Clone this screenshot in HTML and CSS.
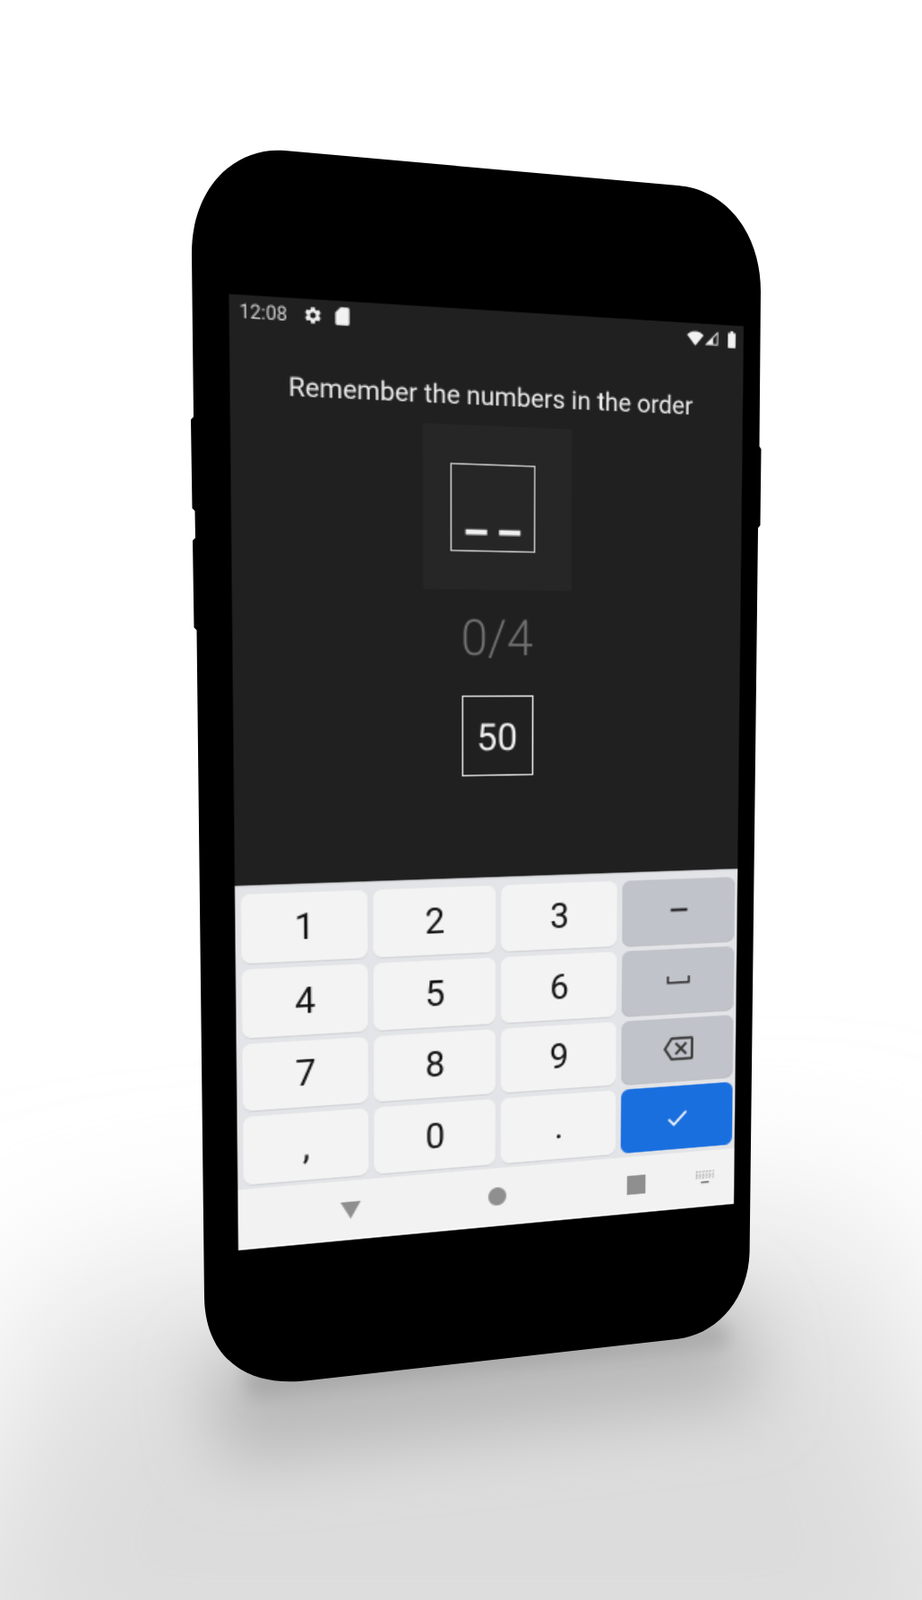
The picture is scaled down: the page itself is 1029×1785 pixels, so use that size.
FILE: index.html
```html
<!DOCTYPE html>
<html lang="en">
<head>
<meta charset="utf-8">
<title>Remember the numbers</title>
<link rel="stylesheet" href="styles.css">
</head>
<body>
<div class="stage">
  <svg class="scene" viewBox="0 0 1029 1785" width="1029" height="1785" aria-hidden="true">
    <defs>
      <filter id="soft" x="-50%" y="-50%" width="200%" height="200%"><feGaussianBlur stdDeviation="100"/></filter>
      <filter id="mid" x="-50%" y="-50%" width="200%" height="200%"><feGaussianBlur stdDeviation="38"/></filter>
      <filter id="tight" x="-50%" y="-50%" width="200%" height="200%"><feGaussianBlur stdDeviation="10"/></filter>
    </defs>
    <polygon class="floor-far" points="60,1440 960,1360 1200,1950 -160,1950"/>
    <polygon class="floor-mid" points="230,1520 820,1450 850,1560 250,1630"/>
    <polygon class="floor-near" points="270,1530 810,1478 810,1500 280,1560"/>
    <path class="body" d="M214 285 C213 210 262 163 318 168 L757 207 C812 212 849 262 849 325 L847.500 498 L849.500 501 L848.500 586 L846 589 L836.600 1397 C835 1450 800 1489 755 1494 L345 1540 C272 1549 229 1512 228 1447 L219.500 703 L216.500 700 L215 603 L218 600 L217.500 570 L214.500 567 L213 468 L216 465 Z"/>
  </svg>

  <div class="screen">
    <div class="status">
      <span class="clock">12:08</span>
      <svg class="ic gear" viewBox="0 0 24 24"><path d="M19.14 12.94c.04-.3.06-.61.06-.94 0-.32-.02-.64-.07-.94l2.03-1.58c.18-.14.23-.41.12-.61l-1.92-3.32c-.12-.22-.37-.29-.59-.22l-2.39.96c-.5-.38-1.03-.7-1.62-.94l-.36-2.54c-.04-.24-.24-.41-.48-.41h-3.84c-.24 0-.43.17-.47.41l-.36 2.54c-.59.24-1.13.57-1.62.94l-2.39-.96c-.22-.08-.47 0-.59.22L2.74 8.87c-.12.21-.08.47.12.61l2.03 1.58c-.05.3-.09.63-.09.94s.02.64.07.94l-2.03 1.58c-.18.14-.23.41-.12.61l1.92 3.32c.12.22.37.29.59.22l2.39-.96c.5.38 1.03.7 1.62.94l.36 2.54c.05.24.24.41.48.41h3.84c.24 0 .44-.17.47-.41l.36-2.54c.59-.24 1.13-.56 1.62-.94l2.39.96c.22.08.47 0 .59-.22l1.92-3.32c.12-.22.07-.47-.12-.61l-2.01-1.58zM12 15.6c-1.98 0-3.6-1.62-3.6-3.6s1.62-3.6 3.6-3.6 3.6 1.62 3.6 3.6-1.62 3.6-3.6 3.6z"/></svg>
      <svg class="ic sd" viewBox="0 0 24 24"><path d="M18 2h-8L4.02 8 4 20c0 1.1.9 2 2 2h12c1.1 0 2-.9 2-2V4c0-1.1-.9-2-2-2z"/></svg>
      <span class="spacer"></span>
      <svg class="ic wifi" viewBox="0 0 24 24"><path d="M12 21.5L.5 7.5C3.5 4.8 7.5 3 12 3s8.500 1.800 11.500 4.500z"/></svg>
      <svg class="ic signal" viewBox="0 0 24 24"><path class="dim" d="M22 22H2L22 2z"/><path d="M14 22H2L14 10z"/></svg>
      <svg class="ic battery" viewBox="0 0 24 24"><path d="M16 4h-2V2h-4v2H8c-.6 0-1 .4-1 1v16c0 .6.4 1 1 1h8c.6 0 1-.4 1-1V5c0-.6-.4-1-1-1z"/></svg>
    </div>
    <main class="game">
      <h1 class="title">Remember the numbers in the order</h1>
      <div class="panel">
        <div class="cell"><span class="blanks">_ _</span></div>
      </div>
      <div class="progress">0/4</div>
      <div class="answer">50</div>
    </main>
    <section class="keyboard">
      <div class="key">1</div>
      <div class="key">2</div>
      <div class="key">3</div>
      <div class="key fn dash">–</div>
      <div class="key">4</div>
      <div class="key">5</div>
      <div class="key">6</div>
      <div class="key fn">
        <svg class="space" viewBox="0 0 18 6"><path d="M1 0v4.800h16V0"/></svg>
      </div>
      <div class="key">7</div>
      <div class="key">8</div>
      <div class="key">9</div>
      <div class="key fn">
        <svg class="backspace" viewBox="0 0 24 24"><path d="M22 3H7c-.69 0-1.230.35-1.590.88L0 12l5.410 8.110c.36.53.9.89 1.590.89h15c1.100 0 2-.9 2-2V5c0-1.100-.9-2-2-2zm0 16H7.070L2.400 12l4.660-7H22v14zm-11.590-2L14 13.410 17.590 17 19 15.590 15.410 12 19 8.410 17.590 7 14 10.590 10.410 7 9 8.410 12.590 12 9 15.590z"/></svg>
      </div>
      <div class="key">,</div>
      <div class="key">0</div>
      <div class="key">.</div>
      <div class="key enter">
        <svg class="check" viewBox="0 0 24 24"><path d="M9 16.170L4.830 12l-1.420 1.410L9 19 21 7l-1.410-1.410z"/></svg>
      </div>
    </section>
    <nav class="navbar">
      <span class="nav-slot"><svg class="nav-tri" viewBox="0 0 14 12"><path d="M0 0h14L7 12z"/></svg></span>
      <span class="nav-slot"><span class="nav-dot"></span></span>
      <span class="nav-slot"><span class="nav-square"></span></span>
      <svg class="nav-kb" viewBox="0 0 20 14"><path d="M1 1h18M1 5h18" stroke-dasharray="2 1.300"/><path d="M1 3h18M1 7h18" stroke-dasharray="1 2.300"/><path class="nav-kb-bar" d="M6 11h8"/></svg>
    </nav>
  </div>
</div>
</body>
</html>
```

FILE: styles.css
```css
html, body {
  margin: 0;
  padding: 0;
  background: #fff;
}

.stage {
  position: relative;
  width: 1029px;
  height: 1785px;
  overflow: hidden;
  background: #fff;
  font-family: Roboto, "Liberation Sans", sans-serif;
}

.scene {
  position: absolute;
  left: 0;
  top: 0;
  display: block;
}

.floor-far { fill: #dcdcdc; filter: url(#soft); }
.floor-mid { fill: #b8b8b8; filter: url(#mid); }
.floor-near { fill: #a8a8a8; filter: url(#tight); }
.body { fill: #000; }

/* The phone screen is a flat 360x640 layout, projected on the tilted device */
.screen {
  position: absolute;
  left: 0;
  top: 0;
  width: 360px;
  height: 640px;
  display: flex;
  flex-direction: column;
  background: #202020;
  transform-origin: 0 0;
  transform: matrix3d(1.80806, 0.19308, 0, 0.00025569,
                      0.033327, 1.75592, 0, 0.00006361,
                      0, 0, 1, 0,
                      255.5, 328, 0, 1);
  filter: blur(0.35px);
}

.status {
  display: flex;
  align-items: center;
  height: 20px;
  padding: 0 2px 0 6.500px;
  color: #ddd;
  fill: #f2f2f2;
  flex: none;
}

.clock { font-size: 12.500px; width: 41px; color: #d2d2d2; }
.ic { display: block; flex: none; }
.gear { width: 13px; height: 13px; margin-right: 6px; }
.sd { width: 14px; height: 14px; }
.spacer { flex: 1; }
.wifi { width: 13px; height: 13px; margin-right: 1px; }
.signal { width: 10px; height: 10px; margin-right: 3px; }
.signal .dim { fill: none; stroke: #f2f2f2; stroke-width: 2; }
.battery { width: 14px; height: 14px; }

.game {
  flex: 1;
  min-height: 0;
  display: flex;
  flex-direction: column;
  align-items: center;
}

.title {
  margin: 26.500px 0 0;
  font-size: 17.800px;
  line-height: 22px;
  font-weight: 400;
  color: #eeeeee;
}

.panel {
  margin-top: 9.500px;
  width: 105px;
  height: 112px;
  display: flex;
  align-items: center;
  justify-content: center;
  background: #262626;
  flex: none;
}

.cell {
  box-sizing: border-box;
  width: 60px;
  height: 60px;
  margin-right: 6px;
  border: 1.200px solid #c8c8c8;
  display: flex;
  align-items: flex-end;
  justify-content: center;
  overflow: hidden;
}

.blanks {
  font-size: 34px;
  font-weight: 700;
  line-height: 22px;
  color: #f0f0f0;
  padding-bottom: 15px;
}

.progress {
  margin-top: 13px;
  font-size: 34px;
  line-height: 40px;
  font-weight: 300;
  color: #707070;
}

.answer {
  box-sizing: border-box;
  margin-top: 20px;
  width: 51px;
  height: 56px;
  padding-top: 2px;
  border: 1.300px solid #e6e6e6;
  display: flex;
  align-items: center;
  justify-content: center;
  font-size: 26px;
  color: #f0f0f0;
}

.keyboard {
  flex: none;
  box-sizing: border-box;
  height: 208px;
  padding: 5px 2px 3px 3.500px;
  display: grid;
  grid-template-columns: repeat(4, 1fr);
  grid-template-rows: repeat(4, 1fr);
  gap: 4px 4px;
  background: #e3e4e7;
  border-top: 1px solid #cfd0d3;
}

.key {
  display: flex;
  align-items: center;
  justify-content: center;
  background: #f3f3f3;
  border-radius: 6px;
  box-shadow: 0 .6px 0 #c9cacd;
  color: #141414;
  font-size: 25px;
}

.fn { background: #c1c3ca; box-shadow: 0 .6px 0 #a9abb1; }
.dash { font-size: 26px; }
.enter { background: #1a6fdf; box-shadow: none; }

.space { width: 18px; height: 6px; fill: none; stroke: #222; stroke-width: 1.400; }
.backspace { width: 23px; height: 23px; fill: #3a3a3a; }
.check { width: 20px; height: 20px; fill: #f4f7fd; }

.navbar {
  position: relative;
  flex: none;
  height: 42px;
  display: flex;
  align-items: center;
  padding-left: 24px;
  background: #f2f2f2;
  border-bottom: 1px solid #fff;
  box-sizing: border-box;
}

.nav-slot {
  display: flex;
  justify-content: center;
  width: 104px;
}

.nav-tri { width: 15px; height: 12px; fill: #8f8f8f; }
.nav-dot { width: 13px; height: 13px; border-radius: 50%; background: #8f8f8f; }
.nav-square { width: 14px; height: 14px; background: #8f8f8f; }

.nav-kb {
  position: absolute;
  right: 14px;
  top: 15px;
  width: 18px;
  height: 11px;
  fill: none;
  stroke: #8a8a8a;
  stroke-width: 1;
}
.nav-kb-bar { stroke: #666; stroke-width: 1.500; }
```
